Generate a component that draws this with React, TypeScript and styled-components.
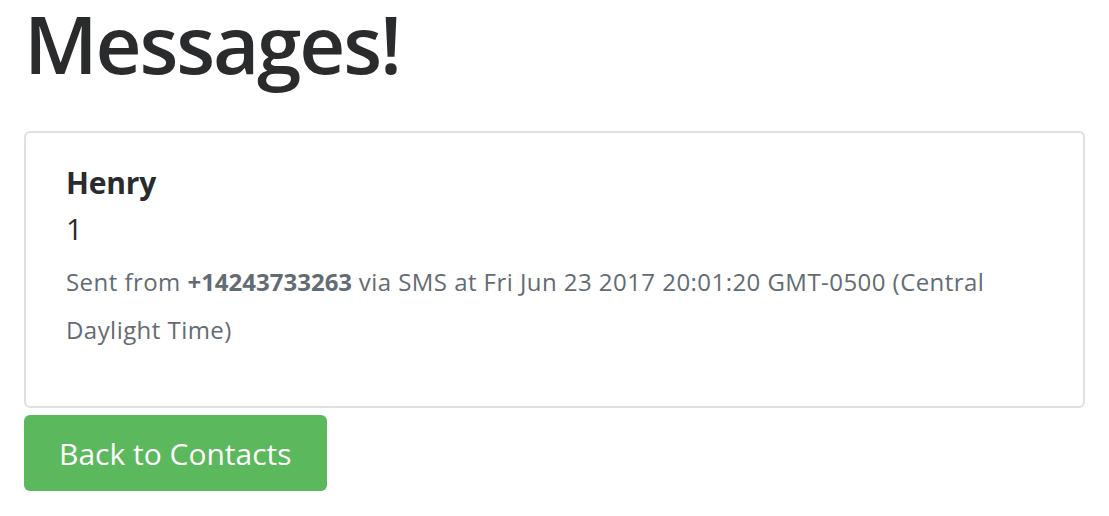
import styled, { createGlobalStyle } from 'styled-components';

const GlobalStyle = createGlobalStyle`
  html, body {
    margin: 0;
    padding: 0;
    background: #fff;
  }
  body {
    font-family: 'Open Sans', 'Noto Sans', sans-serif;
    color: #292b2c;
  }
`;

const Page = styled.div`
  padding: 0 24px;
`;

const Title = styled.h1`
  font-size: 80px;
  font-weight: 600;
  line-height: 85px;
  margin: 0 0 46px;
  color: #292b2c;
  letter-spacing: -2.2px;
`;

const Card = styled.div`
  border: 2px solid #e0e0e0;
  border-radius: 6px;
  padding: 28px 40px 52px;
`;

const Name = styled.h4`
  font-size: 30px;
  font-weight: 700;
  margin: 0;
  line-height: 44px;
  letter-spacing: -0.2px;
`;

const Body = styled.p`
  font-size: 29px;
  font-weight: 400;
  margin: 0;
  line-height: 48px;
`;

const Meta = styled.p`
  font-size: 24px;
  line-height: 48px;
  letter-spacing: 0.45px;
  color: #636c72;
  margin: 5px 0 0;

  b {
    font-weight: 700;
    letter-spacing: 0;
  }
`;

const BackButton = styled.button`
  margin-top: 7px;
  background: #5cb85c;
  border: none;
  border-radius: 6px;
  color: #fff;
  font-family: inherit;
  font-size: 30px;
  padding: 0 35px;
  height: 76px;
  cursor: pointer;
`;

export default function App() {
  return (
    <Page>
      <GlobalStyle />
      <Title>Messages!</Title>
      <Card>
        <Name>Henry</Name>
        <Body>1</Body>
        <Meta>
          Sent from <b>+14243733263</b> via SMS at Fri Jun 23 2017 20:01:20 GMT-0500 (Central
          Daylight Time)
        </Meta>
      </Card>
      <BackButton>Back to Contacts</BackButton>
    </Page>
  );
}
